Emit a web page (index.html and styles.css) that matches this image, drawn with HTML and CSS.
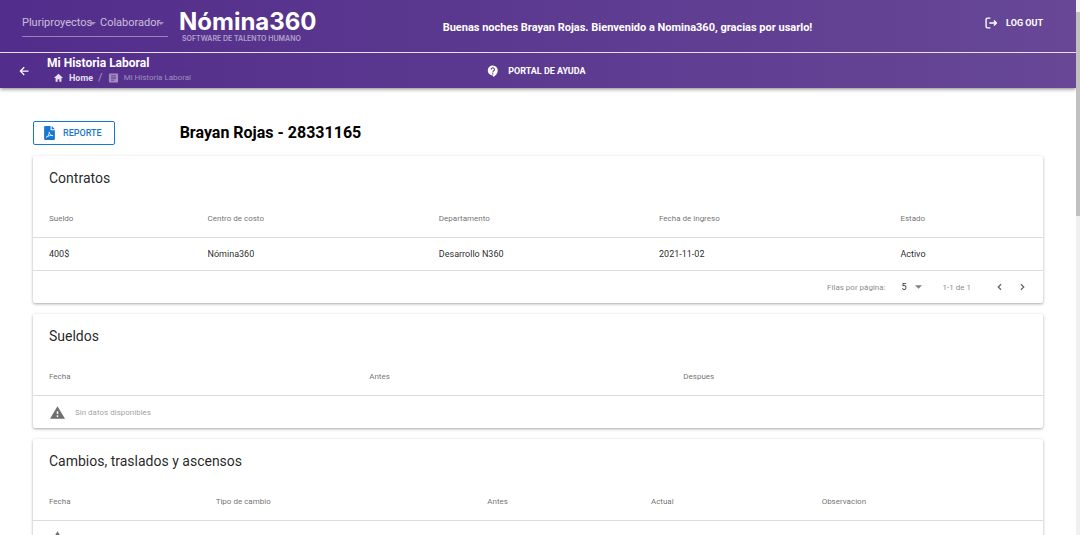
FILE: index.html
```html
<!DOCTYPE html>
<html lang="es">
<head>
<meta charset="utf-8">
<meta name="viewport" content="width=device-width, initial-scale=1">
<title>Mi Historia Laboral - Nómina360</title>
<link rel="stylesheet" href="styles.css">
</head>
<body>
<div class="app">
  <header class="header">
    <div class="topbar">
      <div class="brand">
        <div class="filters">
          <label class="filter filter-project">
            <select class="filter-select" aria-label="Proyecto"><option>Pluriproyectos</option></select>
            <svg class="filter-arrow" viewBox="0 0 10 5" aria-hidden="true"><path d="M0 0h10L5 5z"/></svg>
          </label>
          <label class="filter">
            <select class="filter-select" aria-label="Rol"><option>Colaborador</option></select>
            <svg class="filter-arrow" viewBox="0 0 10 5" aria-hidden="true"><path d="M0 0h10L5 5z"/></svg>
          </label>
        </div>
        <div class="logo">
          <span class="logo-name">Nómina360</span>
          <span class="logo-tag">SOFTWARE DE TALENTO HUMANO</span>
        </div>
      </div>
      <p class="greeting">Buenas noches Brayan Rojas. Bienvenido a Nomina360, gracias por usarlo!</p>
      <button class="bar-button" type="button">
        <svg class="icon-logout" viewBox="0 0 24 22" aria-hidden="true"><path d="M10 2H4.500Q2 2 2 4.500V17.500Q2 20 4.500 20H10M8 11H21M16.500 6.500 21 11l-4.500 4.500" fill="none" stroke="currentColor" stroke-width="2.600"/></svg>
        LOG OUT
      </button>
    </div>
    <div class="subbar">
      <div class="location">
        <button class="back" type="button" aria-label="Volver">
          <svg class="icon-back" viewBox="0 0 24 24" aria-hidden="true"><path d="M21 11v2.500H7.800l5.600 5.600L11.600 21 3 12.200 11.600 3.500l1.800 1.900L7.800 11z"/></svg>
        </button>
        <div>
          <h1 class="page-title">Mi Historia Laboral</h1>
          <nav class="crumbs" aria-label="Ruta">
            <a class="crumb crumb-home" href="#home">
              <svg class="icon-crumb" viewBox="0 0 24 24" aria-hidden="true"><path d="M10 21v-6h4v6h5v-9h4L12 2 1 12h4v9z"/></svg>
              Home
            </a>
            <span class="crumb-slash">/</span>
            <span class="crumb crumb-current">
              <svg class="icon-crumb" viewBox="0 0 24 24" aria-hidden="true"><path d="M3 1h18q2 0 2 2v18q0 2-2 2H3q-2 0-2-2V3q0-2 2-2zm3 5v2h12V6zm0 5v2h12v-2zm0 5v2h8v-2z" fill-rule="evenodd"/></svg>
              Mi Historia Laboral
            </span>
          </nav>
        </div>
      </div>
      <a class="help" href="#ayuda">
        <svg class="icon-help" viewBox="0 0 24 24" aria-hidden="true"><path d="M11.500 1a10 10 0 0 0 0 20h.5v3c5-2.300 9.500-7 9.500-12.500A10 10 0 0 0 11.500 1z" fill="#fff"/><path d="M8.300 9.200a3.300 3.300 0 1 1 5.400 2.300c-1.200 1-2.200 1.500-2.200 3.500M11.500 16.500v2.300" fill="none" stroke="#5b388f" stroke-width="2.200"/></svg>
        PORTAL DE AYUDA
      </a>
    </div>
  </header>

  <main class="content">
    <div class="employee">
      <button class="report" type="button">
        <svg class="icon-pdf" viewBox="0 0 20 26" aria-hidden="true"><path d="M2 0h10v7q0 1 1 1h7v16q0 2-2 2H2q-2 0-2-2V2q0-2 2-2zM14 0l6 6h-6z" fill="#1976d2"/><path d="M4 21c3-1 6-6 5.500-10C10 15 13 18 16.500 18 13 17 7 18 4 21z" fill="none" stroke="#fff" stroke-width="1.500"/></svg>
        REPORTE
      </button>
      <h2 class="employee-name">Brayan Rojas - 28331165</h2>
    </div>

    <section class="card">
      <h3 class="card-title" id="t-contratos">Contratos</h3>
      <table class="table table-contracts" aria-labelledby="t-contratos">
        <colgroup><col><col><col><col><col></colgroup>
        <thead><tr><th>Sueldo</th><th>Centro de costo</th><th>Departamento</th><th>Fecha de ingreso</th><th>Estado</th></tr></thead>
        <tbody><tr><td>400$</td><td>Nómina360</td><td>Desarrollo N360</td><td>2021-11-02</td><td>Activo</td></tr></tbody>
      </table>
      <div class="pager">
        <label for="rows">Filas por página:</label>
        <span class="rows">
          <select class="rows-select" id="rows"><option>5</option></select>
          <svg class="rows-arrow" viewBox="0 0 10 5" aria-hidden="true"><path d="M0 0h10L5 5z"/></svg>
        </span>
        <span class="range">1-1 de 1</span>
        <button class="page-button" type="button" aria-label="Anterior"><svg class="icon-chevron" viewBox="0 0 8 12" aria-hidden="true"><path d="M6.500 1.500 2 6l4.500 4.500"/></svg></button>
        <button class="page-button" type="button" aria-label="Siguiente"><svg class="icon-chevron" viewBox="0 0 8 12" aria-hidden="true"><path d="M1.500 1.500 6 6l-4.500 4.500"/></svg></button>
      </div>
    </section>

    <section class="card">
      <h3 class="card-title" id="t-sueldos">Sueldos</h3>
      <table class="table table-salaries" aria-labelledby="t-sueldos">
        <colgroup><col><col><col></colgroup>
        <thead><tr><th>Fecha</th><th>Antes</th><th>Despues</th></tr></thead>
      </table>
      <p class="empty"><svg class="icon-warning" viewBox="0 0 24 20" aria-hidden="true"><path d="M12 0 24 20H0zM10.800 8v4.500h2.400V8zm0 6.500v2.500h2.400v-2.500z" fill-rule="evenodd"/></svg>Sin datos disponibles</p>
    </section>

    <section class="card">
      <h3 class="card-title" id="t-cambios">Cambios, traslados y ascensos</h3>
      <table class="table table-changes" aria-labelledby="t-cambios">
        <colgroup><col><col><col><col><col></colgroup>
        <thead><tr><th>Fecha</th><th>Tipo de cambio</th><th>Antes</th><th>Actual</th><th>Observacion</th></tr></thead>
      </table>
      <p class="empty"><svg class="icon-warning" viewBox="0 0 24 20" aria-hidden="true"><path d="M12 0 24 20H0zM10.800 8v4.500h2.400V8zm0 6.500v2.500h2.400v-2.500z" fill-rule="evenodd"/></svg>Sin datos disponibles</p>
    </section>
  </main>
</div>
<div class="scroll-track" aria-hidden="true"><div class="scroll-thumb"></div></div>
</body>
</html>
```
FILE: styles.css
```css
* { box-sizing: border-box; }

body {
  margin: 0;
  height: 100vh;
  overflow: hidden;
  display: grid;
  grid-template-columns: minmax(0, 1fr) 4px;
  background: #fff;
  color: rgba(0, 0, 0, 0.87);
  font-family: Roboto, "Liberation Sans", sans-serif;
  font-size: 9px;
}

h1, h2, h3, p { margin: 0; }

button, select { font: inherit; color: inherit; }

button { border: 0; background: none; padding: 0; }

select {
  appearance: none;
  border: 0;
  background: none;
  padding: 0;
}

svg { display: block; flex: none; fill: currentColor; }

.app { height: 100vh; overflow: hidden; }

/* Header */
.header {
  position: relative;
  color: #fff;
  background: linear-gradient(90deg, #522d8b, #674796);
  box-shadow: 0 1px 4px rgba(0, 0, 0, 0.5);
}

.topbar {
  display: grid;
  grid-template-columns: 41% 1fr auto;
  height: 53px;
  padding-right: 33px;
  border-bottom: 1px solid #e6dff0;
}

.brand { display: flex; gap: 11px; padding-left: 22px; }

.filters {
  display: flex;
  gap: 7px;
  width: 146px;
  height: 37px;
  padding-top: 16px;
  border-bottom: 1px solid rgba(255, 255, 255, 0.4);
}

.filter { position: relative; height: 14px; }

.filter-select {
  font-size: 11px;
  line-height: 14px;
  color: rgba(255, 255, 255, 0.7);
}

.filter-arrow {
  position: absolute;
  right: -3px;
  top: 6px;
  width: 6px;
  height: 3px;
  color: rgba(255, 255, 255, 0.45);
}

.logo { padding-top: 10px; }

.logo-name, .logo-tag { display: block; font-family: Inter, "Liberation Sans", sans-serif; white-space: nowrap; }

.logo-name { font-size: 24px; font-weight: 700; line-height: 24px; }

.logo-tag { padding-left: 3px; font-size: 7px; font-weight: 600; line-height: 10px; color: rgba(255, 255, 255, 0.55); }

.greeting { padding: 21px 0 0 15px; font-size: 11px; font-weight: 700; line-height: 14px; }

.bar-button {
  align-self: start;
  display: flex;
  align-items: center;
  gap: 8px;
  margin-top: 16px;
  font-size: 9px;
  font-weight: 700;
  line-height: 14px;
}

.icon-logout { width: 13px; height: 12px; }

.subbar {
  display: grid;
  grid-template-columns: 45% 1fr;
  align-items: center;
  height: 35px;
}

.location { display: flex; align-items: center; gap: 17px; padding-left: 18px; }

.icon-back { width: 12px; height: 12px; }

.page-title { font-size: 12px; font-weight: 700; line-height: 15px; }

.crumbs { display: flex; align-items: center; gap: 5px; padding-left: 6px; line-height: 14px; }

.crumb { display: flex; align-items: center; gap: 5px; }

.crumb-home { color: rgba(255, 255, 255, 0.85); font-weight: 700; text-decoration: none; }

.crumb-slash { font-size: 11px; color: rgba(255, 255, 255, 0.5); }

.crumb-current { font-size: 8px; color: rgba(255, 255, 255, 0.45); }

.icon-crumb { width: 11px; height: 10px; }

.help {
  display: flex;
  align-items: center;
  gap: 9px;
  padding-left: 3px;
  color: #fff;
  font-size: 9px;
  font-weight: 700;
  text-decoration: none;
}

.icon-help { width: 12px; height: 12px; }

/* Page body */
.content {
  display: flex;
  flex-direction: column;
  gap: 11px;
  padding: 33px 33px 11px;
}

.employee { display: flex; align-items: center; gap: 65px; }

.report {
  display: flex;
  align-items: center;
  gap: 8px;
  height: 24px;
  padding: 0 12px 0 10px;
  border: 1px solid #1976d2;
  border-radius: 2px;
  color: #1976d2;
  font-size: 9px;
  font-weight: 500;
}

.icon-pdf { width: 11px; height: 14px; }

.employee-name { font-size: 16px; font-weight: 700; line-height: 24px; color: #000; }

.card {
  border-radius: 2px;
  background: #fff;
  box-shadow: 0 1px 3px rgba(0, 0, 0, 0.35);
}

.card-title {
  padding: 0 16px;
  font-size: 14px;
  font-weight: 400;
  line-height: 44px;
}

.table {
  width: 100%;
  table-layout: fixed;
  border-collapse: separate;
  border-spacing: 0;
}

.table th, .table td {
  padding: 0 16px;
  border-bottom: 1px solid #dcdcdc;
  text-align: left;
  white-space: nowrap;
}

.table th { height: 38px; font-size: 8px; font-weight: 400; color: rgba(0, 0, 0, 0.6); }

.table td { height: 33px; }

.table-contracts col:nth-child(1) { width: 15.7%; }
.table-contracts col:nth-child(2) { width: 22.9%; }
.table-contracts col:nth-child(3) { width: 21.8%; }
.table-contracts col:nth-child(4) { width: 23.9%; }

.table-salaries col:nth-child(1) { width: 31.7%; }
.table-salaries col:nth-child(2) { width: 31.1%; }

.table-changes col:nth-child(1) { width: 16.5%; }
.table-changes col:nth-child(2) { width: 26.9%; }
.table-changes col:nth-child(3) { width: 16.2%; }
.table-changes col:nth-child(4) { width: 16.9%; }

.pager {
  display: flex;
  align-items: center;
  justify-content: flex-end;
  height: 32px;
  padding-right: 13px;
  font-size: 8px;
  color: rgba(0, 0, 0, 0.5);
}

.rows { display: flex; align-items: center; gap: 7px; margin: 0 21px 0 16px; }

.rows-select { font-size: 9px; color: rgba(0, 0, 0, 0.87); }

.rows-arrow { width: 7px; height: 4px; }

.range { margin-right: 20px; }

.page-button { display: grid; place-items: center; width: 16px; height: 16px; }

.page-button + .page-button { margin-left: 7px; }

.icon-chevron { width: 5px; height: 8px; fill: none; stroke: #666; stroke-width: 2; }

.empty {
  display: flex;
  align-items: center;
  gap: 10px;
  height: 32px;
  padding: 0 17px;
  font-size: 8px;
  color: rgba(0, 0, 0, 0.42);
}

.icon-warning { width: 15px; height: 13px; color: #6f6f6f; }

/* Scroll indicator */
.scroll-track { padding-top: 12px; background: #f1f1f1; }

.scroll-thumb { height: 39%; background: #c1c1c1; }
```
